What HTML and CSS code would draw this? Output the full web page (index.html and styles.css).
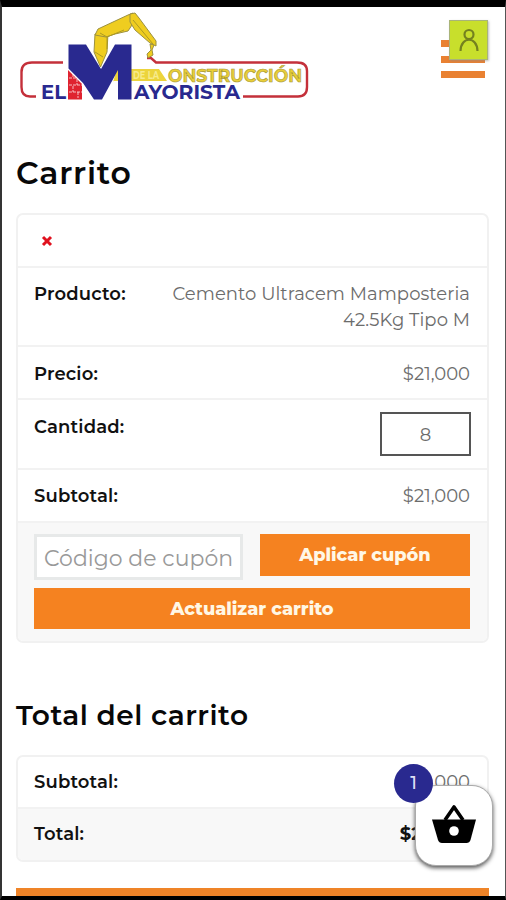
FILE: index.html
```html
<!DOCTYPE html>
<html lang="es">
<head>
<meta charset="utf-8">
<title>Carrito</title>
<link rel="stylesheet" href="styles.css">
</head>
<body>
<div class="page">
  <header class="header">
    <svg class="logo" viewBox="0 0 300 100" width="300" height="100">
      <g fill="none" stroke="#c4303a" stroke-width="2.4">
        <path d="M47 56.500H16Q5.500 56.500 5.500 66V81Q5.500 90.500 14 90.500H20"/>
        <path d="M131 52L135 52L140 56.500H281Q291 56.500 291 65V81Q291 90.500 282 90.500H227"/>
      </g>
      <path d="M52 64L66 78V93.500H52Z" fill="#df2330"/>
      <path d="M53 72h9M53 79h13M53 86h13M57 68v4M61 73v6M57 80v6M62 86v6" stroke="#fff" stroke-width=".7" stroke-dasharray="3 1"/>
      <path d="M97 76L101 63H143L151 75H97Z" fill="#ecd43c"/>
      <path d="M52.500 38.500H70L85 63L99 38.500H115.500V93.500H102V64L86 93.500H78L67 77L52.500 62.500Z" fill="#29298f"/>
      <g fill="#efcd20" stroke="#9c9140" stroke-width="1" stroke-linejoin="round">
        <path d="M79 28L92 27L91 46L84.500 61L78 46Z"/>
        <path d="M79 29L82 23L112 9L117 7L118 16L112 25L99 28L90 31Z"/>
        <path d="M114 8L119 7L123 12L140 35V40L134 37L119 24L114 16Z"/>
        <path d="M138 39L136 44L137 49L132 52L131 48L135 44L134 38Z"/>
      </g>
      <path d="M84 27L91 31L108 24M79 46L87 51M91 31V43M117 14L137 38" fill="none" stroke="#ad9a23"/>
      <text class="logo-small" x="117" y="73" textLength="26" lengthAdjust="spacingAndGlyphs">DE LA</text>
      <text class="logo-gold" x="152" y="75.500" textLength="134" lengthAdjust="spacingAndGlyphs">ONSTRUCCIÓN</text>
      <text class="logo-blue" x="25" y="93" textLength="25" lengthAdjust="spacingAndGlyphs">EL</text>
      <text class="logo-blue" x="118" y="93" textLength="106" lengthAdjust="spacingAndGlyphs">AYORISTA</text>
    </svg>
    <div class="menu">
      <i></i><i></i><i></i>
      <span class="account">
        <svg viewBox="0 0 38 40" width="38" height="40" fill="none" stroke="#74811f" stroke-width="2.200"><circle cx="19" cy="13.500" r="4.500"/><path d="M10.500 30C11 15 27 15 27.500 30"/></svg>
      </span>
    </div>
  </header>
  <main>
    <h1>Carrito</h1>
    <section class="card">
      <div class="row remove"><svg viewBox="0 0 12 12" width="12" height="12"><path d="M2 2L10 10M10 2L2 10" stroke="#e0121f" stroke-width="3"/></svg></div>
      <div class="row product"><b>Producto:</b><span class="v name">Cemento Ultracem Mamposteria<br>42.5Kg Tipo M</span></div>
      <div class="row price"><b>Precio:</b><span class="v">$21,000</span></div>
      <div class="row quantity"><b>Cantidad:</b><span class="qty">8</span></div>
      <div class="row sub"><b>Subtotal:</b><span class="v">$21,000</span></div>
      <div class="actions">
        <div class="coupon"><span class="field">Código de cupón</span><button class="apply">Aplicar cupón</button></div>
        <button class="update">Actualizar carrito</button>
      </div>
    </section>
    <h2>Total del carrito</h2>
    <section class="card">
      <div class="row t1"><b>Subtotal:</b><span class="v">$21,000</span></div>
      <div class="row t2"><b>Total:</b><b class="v total">$21,000</b></div>
    </section>
    <div class="checkout"></div>
  </main>
  <div class="basket">
    <svg viewBox="0 0 46 42" width="46" height="42"><path d="M1 16.500H45L39.500 37Q38.500 40 35.500 40H11Q8 40 7 37Z"/><path d="M14 17L23 4L32 17" fill="none" stroke="#000" stroke-width="3.600" stroke-linejoin="round"/><circle cx="23" cy="28" r="4.800" fill="#fff"/></svg>
    <span class="count">1</span>
  </div>
</div>
</body>
</html>
```
FILE: styles.css
```css
* { box-sizing: border-box; }
body { margin: 0; background: #fff; font-family: Montserrat, Inter, "Open Sans", sans-serif; color: #111; }
.page { position: relative; width: 506px; height: 900px; overflow: hidden; border: solid #000; border-width: 7px 1px 4px 2px; border-left-color: #343434; border-right-color: #555; padding: 0 16px 0 14px; }
.header { display: flex; justify-content: space-between; height: 140px; }
.logo { display: block; margin-top: -1px; font-weight: 700; }
.logo-blue { font-size: 19px; fill: #29298f; }
.logo-gold { font-size: 18px; fill: #e9ce38; stroke: #a69836; stroke-width: .6px; }
.logo-small { font-size: 10px; fill: #f7eb8d; }
.menu { position: relative; width: 44px; margin-right: 4px; padding-top: 33px; display: flex; flex-direction: column; gap: 8.5px; }
.menu i { height: 7px; flex: none; background: #e98132; }
.account { position: absolute; left: 8px; top: 13px; width: 39px; height: 40px; background: #c8df2c; border: 1px solid #a9b479; box-shadow: 1px 1px 2px #8888; }
.account svg { display: block; }
h1, h2 { margin: 0; font-weight: 600; color: #080808; white-space: nowrap; }
h1 { height: 66px; font-size: 31.5px; line-height: 52px; letter-spacing: .8px; }
h2 { height: 112px; padding-top: 47px; font-size: 28px; line-height: 50px; letter-spacing: .5px; }
.card { border: 2px solid #f1f1f1; border-radius: 7px; overflow: hidden; }
.row { display: flex; justify-content: space-between; padding: 13px 17px 0 16px; border-bottom: 2px solid #f2f2f2; font-size: 18px; line-height: 26px; white-space: nowrap; }
.row b { font-weight: 600; letter-spacing: .15px; }
.v { font-weight: 400; color: #6c6c6c; text-align: right; }
.name { letter-spacing: .06px; }
.remove { height: 53px; padding: 20px 25px 0 23px; }
.product { height: 79px; }
.price { height: 53px; padding-top: 14px; }
.quantity { height: 70px; padding-top: 12px; }
.quantity b { padding-top: 2px; }
.sub { height: 53px; }
.qty { width: 91px; height: 44px; margin-right: -1px; border: 2px solid #555; line-height: 42px; text-align: center; font-weight: 400; color: #6c6c6c; }
.actions { background: #f8f8f8; height: 118px; padding: 11px 17px 0 16px; }
.coupon { display: flex; justify-content: space-between; height: 54px; }
.field { width: 209px; height: 46px; border: 3px solid #e7e9e9; background: #fff; padding-left: 7px; font-size: 22px; line-height: 43px; font-weight: 400; color: #999; white-space: nowrap; overflow: hidden; }
button { border: 0; padding: 0; background: #f58220; color: #fff7e5; font: 800 17.7px/40px Montserrat, Inter, sans-serif; white-space: nowrap; }
.apply { width: 210px; height: 42px; }
.update { display: block; width: 100%; height: 41px; }
.t1 { height: 52px; padding-top: 12px; }
.t2 { height: 51px; border-bottom: 0; background: #f8f8f8; padding-top: 12px; }
.row .total { color: #111; font-weight: 700; letter-spacing: 0; }
.checkout { margin-top: 26px; height: 20px; background: #ef8428; }
.basket { position: absolute; left: 413px; top: 778px; width: 78px; height: 81px; border-radius: 21px; background: #fff; border: 1px solid #aaa; box-shadow: 0 2px 4px #555; }
.basket > svg { position: absolute; left: 15px; top: 17px; }
.count { position: absolute; left: -22px; top: -22px; width: 39px; height: 39px; border-radius: 50%; background: #29298f; color: #ddddf5; text-align: center; line-height: 39px; font-size: 18px; font-weight: 500; }
```
